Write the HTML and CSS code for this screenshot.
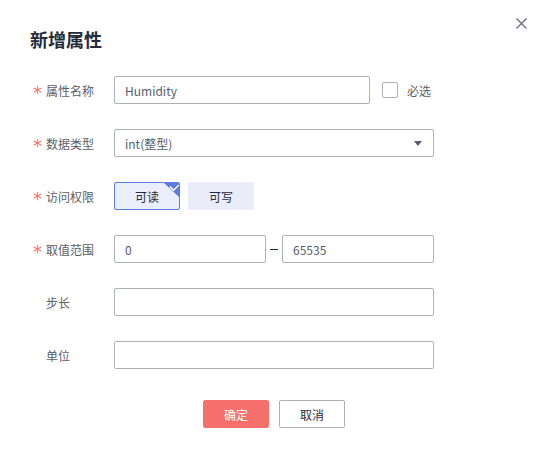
FILE: index.html
```html
<!DOCTYPE html>
<html lang="zh">
<head>
<meta charset="utf-8">
<link rel="stylesheet" href="styles.css">
</head>
<body>
<div class="dialog">
  <button class="close" aria-label="关闭">
    <svg width="11" height="11" viewBox="0 0 11 11"><path d="M0.5 0.5 L10.5 10.5 M10.5 0.5 L0.5 10.5" stroke="#6b7080" stroke-width="1.4" fill="none"/></svg>
  </button>
  <h1 class="title">新增属性</h1>
  <div class="form">
    <div class="row">
      <label class="label"><span class="star">*</span>属性名称</label>
      <div class="field">
        <div class="input w256">Humidity</div>
        <span class="checkbox"></span>
        <span class="check-text">必选</span>
      </div>
    </div>
    <div class="row">
      <label class="label"><span class="star">*</span>数据类型</label>
      <div class="field">
        <div class="input select w320"><span>int(整型)</span>
          <svg class="arrow" width="8" height="5" viewBox="0 0 8 5"><path d="M0 0 H8 L4 5 Z" fill="#575d6c"/></svg>
        </div>
      </div>
    </div>
    <div class="row">
      <label class="label"><span class="star">*</span>访问权限</label>
      <div class="field toggles">
        <div class="toggle active">可读
          <svg class="corner" width="17" height="16" viewBox="0 0 17 16"><path d="M0 0 H17 V16 Z" fill="#5e7ce0"/><path d="M7 4.6 L10.6 8.2 L15.8 3" stroke="#fff" stroke-width="1.5" fill="none"/></svg>
        </div>
        <div class="toggle">可写</div>
      </div>
    </div>
    <div class="row">
      <label class="label"><span class="star">*</span>取值范围</label>
      <div class="field">
        <div class="input w152">0</div>
        <span class="dash"></span>
        <div class="input w152">65535</div>
      </div>
    </div>
    <div class="row">
      <label class="label"><span class="star blank"></span>步长</label>
      <div class="field"><div class="input w320"></div></div>
    </div>
    <div class="row">
      <label class="label"><span class="star blank"></span>单位</label>
      <div class="field"><div class="input w320"></div></div>
    </div>
  </div>
  <div class="footer">
    <button class="btn primary">确定</button>
    <button class="btn">取消</button>
  </div>
</div>
</body>
</html>
```
FILE: styles.css
```css
* { box-sizing: border-box; }
html, body { margin: 0; padding: 0; background: #fff; }
body {
  font-family: "Noto Sans CJK SC", "Noto Sans", sans-serif;
  font-size: 12px;
  color: #575d6c;
  width: 547px;
  height: 459px;
  overflow: hidden;
}
.dialog {
  position: relative;
  padding: 26px 0 0 0;
}
.close {
  position: absolute;
  left: 516px;
  top: 18px;
  width: 11px;
  height: 11px;
  padding: 0;
  border: 0;
  background: none;
  display: block;
}
.close svg { display: block; }
.title {
  margin: 0 0 0 30px;
  font-size: 18px;
  line-height: 26px;
  font-weight: 700;
  color: #252b3a;
}
.form {
  margin-top: 24px;
  display: flex;
  flex-direction: column;
  gap: 25px;
}
.row {
  display: flex;
  align-items: center;
  height: 28px;
}
.label {
  width: 114px;
  padding-left: 33px;
  display: flex;
  align-items: center;
  color: #5c6066;
  font-size: 12px;
}
.star {
  width: 13px;
  height: 12px;
  color: #f66f6a;
  font-size: 18px;
  line-height: 18px;
  padding-top: 0;
  overflow: visible;
  display: block;
  font-family: "DejaVu Sans", sans-serif;
}
.field {
  display: flex;
  align-items: center;
}
.input {
  height: 28px;
  border: 1px solid #adb0b8;
  border-radius: 2px;
  padding: 0 10px;
  display: flex;
  align-items: center;
  color: #575d6c;
  font-size: 12px;
}
.w256 { width: 256px; }
.w320 { width: 320px; }
.w152 { width: 152px; }
.select { justify-content: space-between; padding-right: 11px; }
.arrow { display: block; }
.checkbox {
  width: 16px;
  height: 16px;
  border: 1px solid #adb0b8;
  border-radius: 2px;
  margin-left: 12px;
}
.check-text {
  margin-left: 9px;
  color: #5c6066;
}
.toggles { gap: 8px; }
.toggle {
  position: relative;
  width: 66px;
  height: 28px;
  display: flex;
  align-items: center;
  justify-content: center;
  background: #eaedf9;
  border: 1px solid #eaedf9;
  border-radius: 2px;
  color: #252b3a;
  font-size: 12px;
  overflow: hidden;
}
.toggle.active {
  border-color: #5e7ce0;
  background: #eaeefb;
}
.corner {
  position: absolute;
  top: -1px;
  right: -1px;
  display: block;
}
.dash {
  width: 8px;
  height: 1px;
  background: #252b3a;
  margin: 0 4px;
}
.footer {
  margin-top: 31px;
  display: flex;
  justify-content: center;
  gap: 10px;
  padding-left: 1px;
}
.btn {
  width: 66px;
  height: 28px;
  border: 1px solid #adb0b8;
  border-radius: 2px;
  background: #fff;
  color: #252b3a;
  font-family: "Noto Sans CJK SC", "Noto Sans", sans-serif;
  font-size: 12px;
  padding: 0;
}
.btn.primary {
  background: #f66f6a;
  border-color: #f66f6a;
  color: #fff;
}
```
